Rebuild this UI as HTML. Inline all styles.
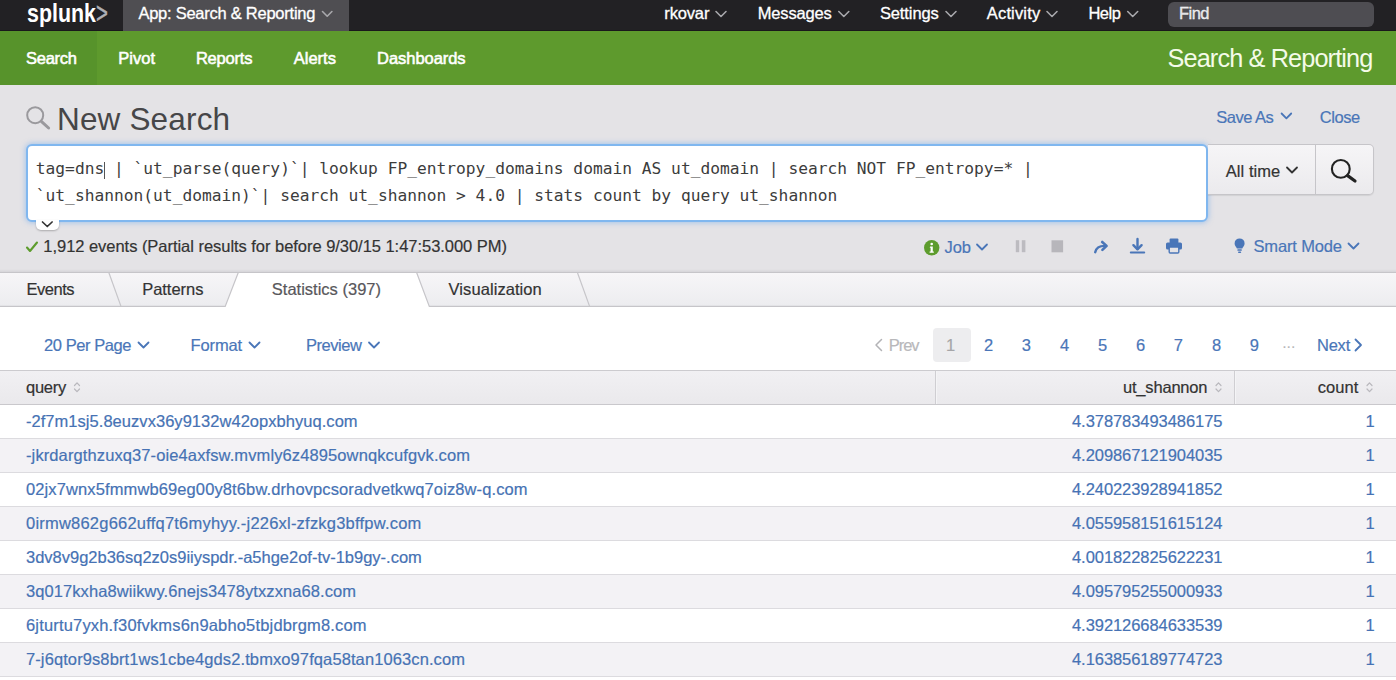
<!DOCTYPE html>
<html lang="en">
<head>
<meta charset="utf-8">
<title>Search | Splunk</title>
<style>
*{box-sizing:border-box;margin:0;padding:0}
html,body{width:1396px;height:680px;overflow:hidden;background:#fff}
body{font-family:"Liberation Sans",sans-serif;font-size:16.5px;color:#333;position:relative}
.abs{position:absolute;white-space:nowrap}
svg{position:absolute;overflow:visible}
/* top bar */
#top{position:absolute;left:0;top:0;width:1396px;height:31px;background:#222124;border-bottom:1px solid #19181b}
#logo{left:26.5px;top:-2px;height:31px;font-size:25px;font-weight:bold;color:#fff;line-height:30px;transform-origin:0 0;transform:scaleX(.855)}
#logogt{left:95.5px;top:0;height:31px;line-height:25px;font-size:30px;color:#b0b0b4;-webkit-text-stroke:.5px #b0b0b4;transform-origin:0 0;transform:scaleX(.68)}
#appbg{position:absolute;left:123px;top:0;width:226px;height:31px;background:#4f4e52}
.tn{top:0;height:31px;line-height:27px;color:#fff;-webkit-text-stroke:.3px #fff}
#find{position:absolute;left:1168px;top:2px;width:206px;height:25px;background:#4e4d52;border-radius:6px}
/* green bar */
#green{position:absolute;left:0;top:31px;width:1396px;height:54px;background:#5e9a2d}
#gactive{position:absolute;left:0;top:0;width:97px;height:54px;background:#57932b}
.gn{top:31px;height:54px;line-height:54px;color:#fff;-webkit-text-stroke:.55px #fff}
#gtitle{top:31px;height:54px;line-height:54px;color:#f4fbe8;font-size:25.3px;left:1167.5px}
/* grey head */
#head{position:absolute;left:0;top:85px;width:1396px;height:187px;background:#e4e3e6}
#title{left:57px;top:99px;font-size:31.5px;line-height:40px;color:#464648}
.lnk{color:#4a76b8;-webkit-text-stroke:.25px #4a76b8}
.ln{line-height:20px;height:20px;-webkit-text-stroke-width:.2px}
#sbox{position:absolute;left:26px;top:144px;width:1182px;height:78px;background:#fff;border:2px solid #80b7ef;border-radius:6px;box-shadow:0 0 5px 1px rgba(110,170,240,.5)}
#sbox pre{position:absolute;left:7.8px;top:9px;font-family:"DejaVu Sans Mono","Liberation Mono",monospace;font-size:16.245px;line-height:27px;color:#3c3c3c}
#cur{position:absolute;left:75.5px;top:16px;width:1px;height:17px;background:#555}
#exp{position:absolute;left:36px;top:220px;width:23px;height:10px;background:#fff;border-radius:0 0 5px 5px;box-shadow:0 1px 2px rgba(0,0,0,.25)}
#tr{position:absolute;left:1208px;top:144px;width:166px;height:51px;background:linear-gradient(#f6f5f7,#ebeaed);border:1px solid #c6c5c9;border-left:none;border-radius:0 5px 5px 0;box-shadow:0 1px 1px rgba(0,0,0,.08)}
#tr i{position:absolute;left:107px;top:0;width:1px;height:49px;background:#c6c5c9}
/* table */
#pag{position:absolute;left:0;top:307px;width:1396px;height:63px;background:#fff}
#p1{position:absolute;left:933px;top:328px;width:38px;height:34px;background:#ededef;border-radius:4px}
.pg{top:335px;width:38px;text-align:center}
#th{position:absolute;left:0;top:370px;width:1396px;height:35px;background:linear-gradient(#f1f0f3,#eae9ec);border-top:1px solid #cccbcf;border-bottom:1px solid #c9c8cc}
#th i{position:absolute;top:0;width:1px;height:33px;background:#cfced2;box-shadow:1px 0 0 #f4f4f6}
.row{position:absolute;left:0;width:1396px;height:34px;border-bottom:1px solid #dcdbdf;line-height:33px;color:#4672b4;-webkit-text-stroke:.2px #4672b4}
.row.o{background:#fff}.row.e{background:#f3f2f5}
.row span{position:absolute;white-space:nowrap}
.q{left:26px}.u{left:1072px}.c{left:1365.5px}
/*FIT*/
#t_app{letter-spacing:-0.251px}
#t_rk{letter-spacing:-0.149px}
#t_msg{letter-spacing:-0.172px}
#t_set{letter-spacing:-0.104px}
#t_act{letter-spacing:0.162px}
#t_help{letter-spacing:-0.446px}
#t_find{letter-spacing:-0.536px}
#g_search{letter-spacing:-0.276px}
#g_pivot{letter-spacing:0.053px}
#g_rep{letter-spacing:-0.197px}
#g_al{letter-spacing:0.023px}
#g_dash{letter-spacing:-0.054px}
#gtitle{letter-spacing:-0.881px}
#title{letter-spacing:0.169px}
#l_save{letter-spacing:-0.491px}
#l_close{letter-spacing:-0.422px}
#l_all{letter-spacing:0.044px}
#l_status{letter-spacing:-0.036px}
#l_job{letter-spacing:-0.005px}
#l_smart{letter-spacing:-0.153px}
#tb_ev{letter-spacing:-0.491px}
#tb_pat{letter-spacing:-0.036px}
#tb_st{letter-spacing:0.005px}
#tb_vis{letter-spacing:0.071px}
#l_pp{letter-spacing:-0.443px}
#l_fmt{letter-spacing:-0.133px}
#l_prv{letter-spacing:-0.431px}
#l_prev{letter-spacing:-1.079px}
#l_next{letter-spacing:-0.179px}
#h_q{letter-spacing:-0.270px}
#h_u{letter-spacing:-0.194px}
#h_c{letter-spacing:0.081px}
#q1{letter-spacing:0.038px}
#q2{letter-spacing:0.108px}
#q3{letter-spacing:0.113px}
#q4{letter-spacing:0.215px}
#q5{letter-spacing:-0.009px}
#q6{letter-spacing:0.075px}
#q7{letter-spacing:0.169px}
#q8{letter-spacing:0.100px}
.u{letter-spacing:-0.058px}
/*ENDFIT*/
</style>
</head>
<body>
<div id="top"></div>
<div id="logo" class="abs">splunk</div>
<div id="logogt" class="abs">&gt;</div>
<div id="appbg"></div>
<div id="t_app" class="abs tn" style="left:138.4px">App: Search &amp; Reporting</div>
<div id="t_rk" class="abs tn" style="left:664.3px">rkovar</div>
<div id="t_msg" class="abs tn" style="left:757.8px">Messages</div>
<div id="t_set" class="abs tn" style="left:879.9px">Settings</div>
<div id="t_act" class="abs tn" style="left:986.8px">Activity</div>
<div id="t_help" class="abs tn" style="left:1088.4px">Help</div>
<div id="find"></div>
<div id="t_find" class="abs tn" style="left:1179px;color:#e2e2e4">Find</div>
<svg width="1396" height="31" style="left:0;top:0" fill="none" stroke="#a8a8ac" stroke-width="1.6" stroke-linecap="round" stroke-linejoin="round">
<path d="M322.5 11.5l4.7 4.7l4.7-4.7"/>
<path d="M716 11.5l5 5l5-5"/>
<path d="M838.8 11.5l5 5l5-5"/>
<path d="M946 11.5l5 5l5-5"/>
<path d="M1047 11.5l5 5l5-5"/>
<path d="M1127.7 11.5l5 5l5-5"/>
</svg>

<div id="green"><div id="gactive"></div></div>
<div id="g_search" class="abs gn" style="left:26.1px">Search</div>
<div id="g_pivot" class="abs gn" style="left:118.2px">Pivot</div>
<div id="g_rep" class="abs gn" style="left:195.9px">Reports</div>
<div id="g_al" class="abs gn" style="left:293.7px">Alerts</div>
<div id="g_dash" class="abs gn" style="left:377.1px">Dashboards</div>
<div id="gtitle" class="abs">Search &amp; Reporting</div>

<div id="head"></div>
<svg width="30" height="30" style="left:22px;top:102px" fill="none" stroke="#9a999d" stroke-linecap="round">
<circle cx="13.2" cy="13.2" r="8" stroke-width="2"/><path d="M19.3 19.3L26.6 26" stroke-width="3"/>
</svg>
<div id="title" class="abs">New Search</div>
<div id="l_save" class="abs lnk ln" style="left:1216.2px;top:107px">Save As</div>
<div id="l_close" class="abs lnk ln" style="left:1319.7px;top:107px">Close</div>
<div id="sbox"><pre>tag=dns | `ut_parse(query)`| lookup FP_entropy_domains domain AS ut_domain | search NOT FP_entropy=* |
`ut_shannon(ut_domain)`| search ut_shannon &gt; 4.0 | stats count by query ut_shannon</pre><div id="cur"></div></div>
<div id="exp"></div>
<div id="tr"><i></i></div>
<div id="l_all" class="abs ln" style="left:1225.8px;top:161px;color:#333">All time</div>
<svg width="40" height="40" style="left:1325px;top:153px" fill="none" stroke="#222" stroke-linecap="round">
<circle cx="15.8" cy="15.9" r="8.9" stroke-width="2.1"/><path d="M22.6 22.6L30 28" stroke-width="3.2"/>
</svg>
<svg width="16" height="12" style="left:26px;top:241px" fill="none" stroke="#5d9c2d" stroke-width="2.1" stroke-linecap="round" stroke-linejoin="round"><path d="M1 6.5l3 3.5l7-8.5"/></svg>
<div id="l_status" class="abs ln" style="left:43.3px;top:236px;color:#333">1,912 events (Partial results for before 9/30/15 1:47:53.000 PM)</div>
<svg width="16" height="16" style="left:923.5px;top:240px"><circle cx="7.7" cy="7.7" r="7.7" fill="#5d9c2d"/><circle cx="7.7" cy="4" r="1.3" fill="#fff"/><path d="M6.2 6.6h2.6v5h1v1.2h-4.2v-1.2h1v-3.8h-0.9z" fill="#fff"/></svg>
<div id="l_job" class="abs lnk ln" style="left:944.4px;top:237px">Job</div>
<svg width="170" height="20" style="left:1014px;top:236px">
<rect x="1.8" y="4.2" width="3.4" height="12" fill="#bcbbc0"/><rect x="7.8" y="4.2" width="3.6" height="12" fill="#bcbbc0"/>
<rect x="37.5" y="4.3" width="11.6" height="12" fill="#b7b6bb"/>
<g fill="none" stroke="#4a76b8" stroke-width="2.4" stroke-linecap="round" stroke-linejoin="round">
<path d="M81.200 16.200c1-4.400 4.300-6.400 9.800-6.300"/><path d="M88.200 6l4.400 3.900l-4.200 4" stroke-width="2.600"/>
<path d="M123.500 3v9.500"/><path d="M119.400 9.200l4.100 4.100l4.100-4.100"/><path d="M116.800 16.500h13.400" stroke-width="2"/>
</g>
<g fill="#4a76b8"><rect x="155.6" y="2.6" width="8.8" height="5" rx="1"/><rect x="152" y="6.4" width="16" height="7.2" rx="1.6"/><rect x="155.2" y="11" width="9.6" height="6" rx="1" stroke="#4a76b8" stroke-width="1.4" fill="#e4e3e6"/></g>
</svg>
<svg width="14" height="18" style="left:1233px;top:237px" fill="#4a76b8"><path d="M6.6 1.4a5 5 0 0 1 5 5c0 2.3-1.6 3.2-2.3 5h-5.4c-.7-1.8-2.3-2.7-2.3-5a5 5 0 0 1 5-5z"/><rect x="4.4" y="12.2" width="4.4" height="1.6" rx=".5"/><rect x="5" y="14.4" width="3.2" height="1.6" rx=".8"/></svg>
<div id="l_smart" class="abs lnk ln" style="left:1253.5px;top:236px">Smart Mode</div>

<svg width="1396" height="40" style="left:0;top:269px">
<defs><linearGradient id="tg" x1="0" y1="0" x2="0" y2="1"><stop offset="0" stop-color="#f7f6f8"/><stop offset="1" stop-color="#ececef"/></linearGradient>
<linearGradient id="sh" x1="0" y1="0" x2="0" y2="1"><stop offset="0" stop-color="#e4e3e6"/><stop offset="1" stop-color="#d6d5d9"/></linearGradient></defs>
<rect x="0" y="0" width="1396" height="3" fill="url(#sh)"/>
<rect x="0" y="3" width="1396" height="35" fill="url(#tg)"/>
<path d="M225 38L238.300 3.500H416.600L429.500 38z" fill="#fff"/>
<g fill="none" stroke="#c6c5c9" stroke-width="1.200">
<path d="M0 3.500H1396"/><path d="M0 37.400H225.200L238.300 3.500"/><path d="M416.600 3.500L429.300 37.400H1396"/>
<path d="M108.800 3.500L121 37.400"/><path d="M577.400 3.500L589.600 37.400"/></g>
</svg>
<div id="tb_ev" class="abs ln" style="left:26.600px;top:279px">Events</div>
<div id="tb_pat" class="abs ln" style="left:142.200px;top:279px">Patterns</div>
<div id="tb_st" class="abs ln" style="left:271.800px;top:279px;color:#58575b">Statistics (397)</div>
<div id="tb_vis" class="abs ln" style="left:448.600px;top:279px">Visualization</div>

<div id="pag"></div>
<div id="l_pp" class="abs lnk ln" style="left:44.100px;top:335px">20 Per Page</div>
<div id="l_fmt" class="abs lnk ln" style="left:190.600px;top:335px">Format</div>
<div id="l_prv" class="abs lnk ln" style="left:305.900px;top:335px">Preview</div>
<div id="l_prev" class="abs ln" style="left:888.800px;top:335px;color:#b8b8bb">Prev</div>
<div id="p1"></div>
<div class="abs ln pg" style="left:931.500px;color:#a5a5a8">1</div>
<div class="abs ln pg lnk" style="left:969.600px">2</div>
<div class="abs ln pg lnk" style="left:1007.300px">3</div>
<div class="abs ln pg lnk" style="left:1045.600px">4</div>
<div class="abs ln pg lnk" style="left:1083.700px">5</div>
<div class="abs ln pg lnk" style="left:1121.700px">6</div>
<div class="abs ln pg lnk" style="left:1159.300px">7</div>
<div class="abs ln pg lnk" style="left:1197.700px">8</div>
<div class="abs ln pg lnk" style="left:1235.300px">9</div>
<div class="abs ln pg" style="left:1270px;color:#b3b3b6;top:333px;letter-spacing:.5px;font-size:14px">...</div>
<div id="l_next" class="abs lnk ln" style="left:1316.900px;top:335px">Next</div>

<div id="th"><i style="left:935px"></i><i style="left:1234px"></i></div>
<div id="h_q" class="abs ln" style="left:26px;top:377px">query</div>
<div id="h_u" class="abs ln" style="left:1123px;top:377px">ut_shannon</div>
<div id="h_c" class="abs ln" style="left:1317.700px;top:377px">count</div>
<svg width="1396" height="20" style="left:0;top:378px" fill="none" stroke="#b9b8bd" stroke-width="1.200" stroke-linecap="round" stroke-linejoin="round">
<path d="M74.500 7.500l2.500-2.700l2.500 2.700M74.500 11l2.500 2.700l2.500-2.700"/>
<path d="M1216 7.500l2.500-2.700l2.500 2.700M1216 11l2.500 2.700l2.500-2.700"/>
<path d="M1367 7.500l2.500-2.700l2.500 2.700M1367 11l2.500 2.700l2.500-2.700"/>
</svg>

<div class="row o" style="top:405px"><span class="q" id="q1">-2f7m1sj5.8euzvx36y9132w42opxbhyuq.com</span><span class="u">4.378783493486175</span><span class="c">1</span></div>
<div class="row e" style="top:439px"><span class="q" id="q2">-jkrdargthzuxq37-oie4axfsw.mvmly6z4895ownqkcufgvk.com</span><span class="u">4.209867121904035</span><span class="c">1</span></div>
<div class="row o" style="top:473px"><span class="q" id="q3">02jx7wnx5fmmwb69eg00y8t6bw.drhovpcsoradvetkwq7oiz8w-q.com</span><span class="u">4.240223928941852</span><span class="c">1</span></div>
<div class="row e" style="top:507px"><span class="q" id="q4">0irmw862g662uffq7t6myhyy.-j226xl-zfzkg3bffpw.com</span><span class="u">4.055958151615124</span><span class="c">1</span></div>
<div class="row o" style="top:541px"><span class="q" id="q5">3dv8v9g2b36sq2z0s9iiyspdr.-a5hge2of-tv-1b9gy-.com</span><span class="u">4.001822825622231</span><span class="c">1</span></div>
<div class="row e" style="top:575px"><span class="q" id="q6">3q017kxha8wiikwy.6nejs3478ytxzxna68.com</span><span class="u">4.095795255000933</span><span class="c">1</span></div>
<div class="row o" style="top:609px"><span class="q" id="q7">6jturtu7yxh.f30fvkms6n9abho5tbjdbrgm8.com</span><span class="u">4.392126684633539</span><span class="c">1</span></div>
<div class="row e" style="top:643px"><span class="q" id="q8">7-j6qtor9s8brt1ws1cbe4gds2.tbmxo97fqa58tan1063cn.com</span><span class="u">4.163856189774723</span><span class="c">1</span></div>
<svg width="1396" height="400" style="left:0;top:0" fill="none" stroke-width="1.8" stroke-linecap="round" stroke-linejoin="round">
<g stroke="#4a76b8"><path d="M1281.6 113.5l4.8 4.8l4.8-4.8"/><path d="M977 244.5l5 5l5-5"/><path d="M1348.5 243.5l5 5l5-5"/>
<path d="M138.5 342.5l5 5l5-5"/><path d="M249.5 342.5l5 5l5-5"/><path d="M369 342.5l5 5l5-5"/><path d="M1355.5 339.5l5.5 5.5l-5.500 5.500"/></g>
<path d="M1287 167.500l5 5l5-5" stroke="#333"/>
<path d="M42.500 222l4.800 4.500l4.800-4.500" stroke="#333" stroke-width="1.700"/>
<path d="M881.500 339.500l-5.500 5.500l5.500 5.500" stroke="#b3b3b6" stroke-width="1.500"/>
</svg>
<div style="position:absolute;left:0;top:404px;width:1396px;height:1px;background:#c9c8cc"></div>
</body>
</html>
